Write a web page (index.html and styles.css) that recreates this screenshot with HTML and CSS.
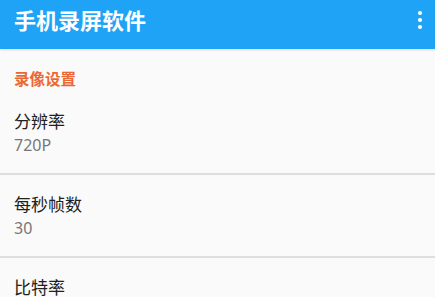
FILE: index.html
```html
<!DOCTYPE html>
<html lang="zh-CN">
<head>
<meta charset="utf-8">
<title>手机录屏软件</title>
<link rel="stylesheet" href="styles.css">
</head>
<body>
<header class="appbar">
  <h1 class="appbar-title">手机录屏软件</h1>
  <button class="appbar-menu" aria-label="更多">
    <svg width="6" height="20" viewBox="0 0 6 20"><circle cx="3" cy="3" r="2.1" fill="#fff"/><circle cx="3" cy="10" r="2.1" fill="#fff"/><circle cx="3" cy="17" r="2.1" fill="#fff"/></svg>
  </button>
</header>
<main class="prefs">
  <div class="pref-category">录像设置</div>
  <div class="pref-item">
    <div class="pref-title">分辨率</div>
    <div class="pref-summary">720P</div>
  </div>
  <div class="pref-item">
    <div class="pref-title">每秒帧数</div>
    <div class="pref-summary">30</div>
  </div>
  <div class="pref-item">
    <div class="pref-title">比特率</div>
  </div>
</main>
</body>
</html>
```
FILE: styles.css
```css
html, body {
  margin: 0;
  padding: 0;
}
body {
  background: #fafafa;
  font-family: "Noto Sans", "Noto Sans CJK SC", sans-serif;
  overflow: hidden;
}
.appbar {
  height: 49px;
  background: #1fa3f6;
  display: flex;
  align-items: center;
  justify-content: space-between;
  padding: 0 12px 0 14px;
  box-sizing: border-box;
  box-shadow: 0 1px 2px rgba(0,0,0,0.12);
  position: relative;
}
.appbar-title {
  margin: 0;
  color: #fff;
  font-size: 22px;
  font-weight: 700;
  line-height: 30px;
  padding-bottom: 9px;
}
.appbar-menu {
  background: none;
  border: 0;
  padding: 0;
  display: flex;
  margin-bottom: 10px;
}
.prefs {
  display: flex;
  flex-direction: column;
}
.pref-category {
  margin-top: 18px;
  padding: 0 14px;
  line-height: 25px;
  font-size: 15.5px;
  font-weight: 700;
  color: #ea6836;
}
.pref-item {
  padding: 19px 14px 15px;
  height: 47px;
  border-bottom: 2px solid #dedede;
}
.pref-title {
  font-size: 17px;
  line-height: 22px;
  color: #212121;
}
.pref-summary {
  font-size: 16px;
  line-height: 24px;
  color: #777;
}
```
